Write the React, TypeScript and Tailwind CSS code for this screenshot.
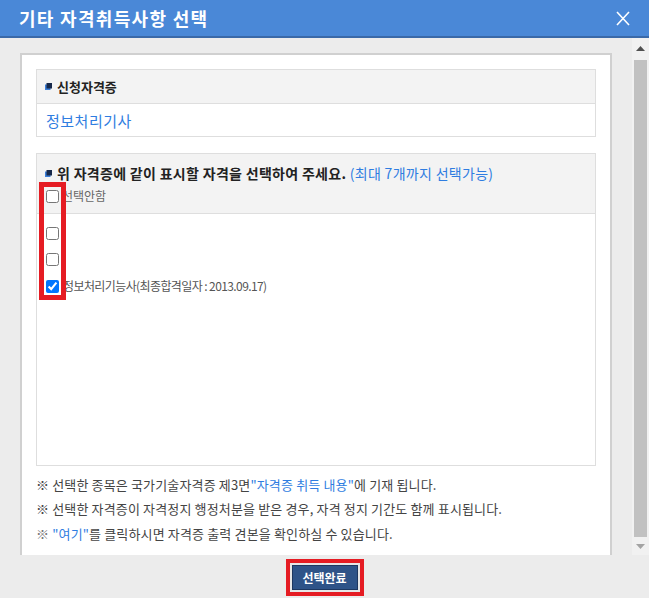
import React from "react";

function Bullet() {
  return (
    <svg width="7" height="7" viewBox="0 0 7 7" className="shrink-0">
      <rect x="0" y="1.5" width="5.5" height="5.5" fill="#3d7fd8" />
      <rect x="1.5" y="0" width="5.5" height="5.5" fill="#16284a" />
    </svg>
  );
}

function Check({ checked = false }: { checked?: boolean }) {
  return (
    <input
      type="checkbox"
      defaultChecked={checked}
      className="w-[13px] h-[13px] shrink-0 m-0"
    />
  );
}

export default function App() {
  return (
    <div className="w-[649px] h-[598px] flex flex-col bg-[#ececec] overflow-hidden font-['Noto_Sans_CJK_KR','Noto_Sans',sans-serif]">
      {/* Header */}
      <div className="h-[38px] shrink-0 bg-[#4a88d7] border-b-2 border-[#3a69a8] flex items-center justify-between pl-[19px] pr-[19px]">
        <div className="text-white text-[18px] font-bold leading-none tracking-[1.3px]">
          기타 자격취득사항 선택
        </div>
        <svg width="14" height="15" viewBox="0 0 14 15" className="mt-[1px]">
          <path d="M1 1 L13 14 M13 1 L1 14" stroke="#ffffff" strokeWidth="1.6" fill="none" />
        </svg>
      </div>

      {/* Middle */}
      <div className="flex-1 flex min-h-0">
        <div className="flex-1 pt-[15px] px-[20px] min-w-0">
          <div className="h-full bg-white border-2 border-b-0 border-[#d0d0d0] pt-[14px] px-[14px]">
            {/* Section 1 */}
            <div className="border border-[#dedede]">
              <div className="h-[34px] bg-[#f3f3f3] border-b border-[#dedede] flex items-center pl-[8px] gap-[5px]">
                <Bullet />
                <span className="text-[13px] font-bold text-[#222] leading-none">신청자격증</span>
              </div>
              <div className="h-[32px] flex items-center pl-[9px]">
                <span className="text-[15px] text-[#2f7de1] leading-none tracking-[0.5px]">정보처리기사</span>
              </div>
            </div>

            {/* Section 2 */}
            <div className="relative mt-[16px] h-[313px] border border-[#dedede]">
              <div className="bg-[#f3f3f3] border-b border-[#dedede] pt-[9px] pb-[7px]">
                <div className="h-[20px] flex items-center pl-[8px] gap-[5px]">
                  <Bullet />
                  <span className="text-[14px] leading-none tracking-[0.3px]">
                    <span className="font-bold text-[#222]">위 자격증에 같이 표시할 자격을 선택하여 주세요.</span>
                    <span className="text-[#2f7de1]"> (최대 7개까지 선택가능)</span>
                  </span>
                </div>
                <div className="mt-[3px] h-[20px] flex items-center pl-[9px] gap-[3px]">
                  <Check />
                  <span className="text-[12px] text-[#666] leading-none">선택안함</span>
                </div>
              </div>
              <div className="pt-[6px]">
                <div className="h-[26.5px] flex items-center pl-[9px]">
                  <Check />
                </div>
                <div className="h-[26.5px] flex items-center pl-[9px]">
                  <Check />
                </div>
                <div className="h-[26.5px] flex items-center pl-[9px] gap-[4px]">
                  <Check checked />
                  <span className="text-[12px] text-[#555] leading-none tracking-[-0.6px]">
                    정보처리기능사(최종합격일자 : 2013.09.17)
                  </span>
                </div>
              </div>
              {/* annotation box */}
              <div className="absolute left-[2px] top-[28px] w-[27px] h-[118px] border-[5px] border-[#e51c23] pointer-events-none" />
            </div>

            {/* Notes */}
            <div className="mt-[6px] text-[13px] text-[#444] tracking-[0.15px]">
              <div className="h-[24.5px] flex items-center leading-none">
                <span>
                  ※ 선택한 종목은 국가기술자격증 제3면
                  <span className="text-[#2f7de1]">"자격증 취득 내용"</span>에 기재 됩니다.
                </span>
              </div>
              <div className="h-[24.5px] flex items-center leading-none">
                <span>※ 선택한 자격증이 자격정지 행정처분을 받은 경우, 자격 정지 기간도 함께 표시됩니다.</span>
              </div>
              <div className="h-[24.5px] flex items-center leading-none">
                <span>
                  <span className="text-[#777]">※ </span>
                  <span className="text-[#2f7de1]">"여기"</span>를 클릭하시면 자격증 출력 견본을 확인하실 수 있습니다.
                </span>
              </div>
            </div>
          </div>
        </div>

        {/* Scrollbar */}
        <div className="w-[17px] shrink-0 bg-[#f1f1f1] flex flex-col">
          <div className="h-[20px] flex items-center justify-center">
            <svg width="9" height="5" viewBox="0 0 9 5">
              <path d="M4.5 0 L9 5 L0 5 Z" fill="#505050" />
            </svg>
          </div>
          <div className="mt-[2px] flex-1 mx-[2px] bg-[#c1c1c1]" />
          <div className="h-[18px] flex items-center justify-center">
            <svg width="9" height="5" viewBox="0 0 9 5">
              <path d="M0 0 L9 0 L4.5 5 Z" fill="#a3a3a3" />
            </svg>
          </div>
        </div>
      </div>

      {/* Footer */}
      <div className="h-[43px] shrink-0 flex justify-center items-start pt-[4px]">
        <div className="border-[4px] border-[#e51c23]">
          <div className="border-2 border-[#e6e6e6]">
            <button className="w-[66px] h-[25px] bg-[#2e5388] border border-[#1d3760] text-white text-[12px] font-bold leading-none flex items-center justify-center">
              선택완료
            </button>
          </div>
        </div>
      </div>
    </div>
  );
}
